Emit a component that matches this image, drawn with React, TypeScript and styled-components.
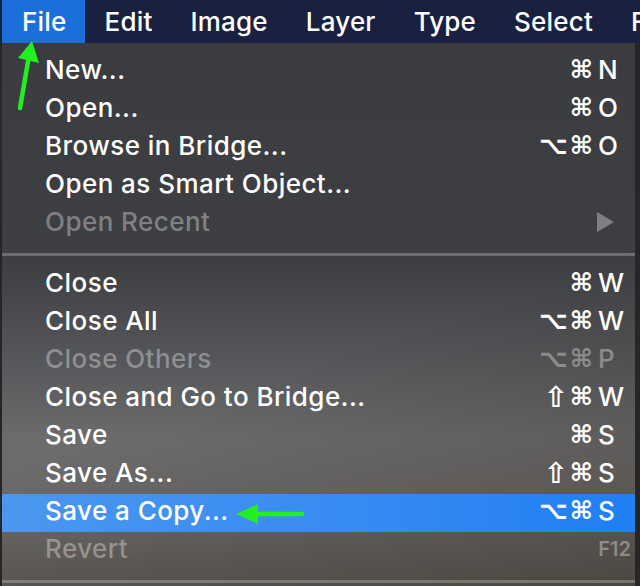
import styled, { createGlobalStyle } from "styled-components";

const GlobalStyle = createGlobalStyle`
  html, body {
    margin: 0;
    padding: 0;
    background: #262626;
  }
  body {
    font-family: Inter, "Noto Sans", "DejaVu Sans", sans-serif;
    -webkit-font-smoothing: antialiased;
  }
`;

const Screen = styled.div`
  position: relative;
  width: 640px;
  height: 586px;
  overflow: hidden;
  background: #262626;
  display: flex;
  flex-direction: column;
`;

const MenuBar = styled.div`
  display: flex;
  height: 43px;
  flex-shrink: 0;
  padding-left: 2px;
  background: #1a2140;
`;

const MenuTitle = styled.div<{ $active?: boolean }>`
  display: flex;
  align-items: center;
  padding: 0 18px 0 20px;
  height: 100%;
  font-size: 26px;
  font-weight: 500;
  letter-spacing: 0.2px;
  color: #ffffff;
  white-space: nowrap;
  background: ${({ $active }) => ($active ? "#1b6fd9" : "transparent")};
`;

const Dropdown = styled.div`
  flex: 1;
  margin: 0 5px 0 2px;
  padding-top: 10px;
  background:
    linear-gradient(160deg, rgba(0, 0, 0, 0) 55%, rgba(40, 30, 20, 0.35) 100%),
    linear-gradient(
      180deg,
      #3b3c3f 0%,
      #3e3f43 40%,
      #56575a 58%,
      #6c6c6d 72%,
      #6b6a69 86%,
      #5d5a56 100%
    );
`;

const Item = styled.div<{ $disabled?: boolean; $selected?: boolean }>`
  box-sizing: border-box;
  display: flex;
  align-items: center;
  height: 38px;
  padding: 0 0 4px 43px;
  line-height: 34px;
  font-size: 26px;
  font-weight: 500;
  letter-spacing: 0.45px;
  color: ${({ $disabled }) => ($disabled ? "rgba(255,255,255,0.34)" : "#ffffff")};
  background: ${({ $selected }) =>
    $selected ? "linear-gradient(90deg, #4b97f0 0%, #3a8cf2 50%, #1f7ff3 100%)" : "transparent"};
`;

const Label = styled.span`
  flex: 1;
  white-space: nowrap;
`;

const Shortcut = styled.span`
  display: flex;
  align-items: center;
  padding-right: 5px;
  letter-spacing: 0;
`;

const Mods = styled.span`
  display: flex;
  align-items: center;
  gap: 2px;
  margin-right: 5px;
`;

const ModGlyph = styled.span<{ $shift?: boolean }>`
  font-family: "DejaVu Sans", sans-serif;
  font-weight: bold;
  font-size: ${({ $shift }) => ($shift ? "29px" : "25px")};
  line-height: 30px;
`;

const Key = styled.span`
  width: 32px;
`;

const FKey = styled.span`
  font-size: 20px;
  font-weight: 600;
  letter-spacing: 0;
  padding-right: 4px;
`;

const SubArrow = styled.span`
  width: 0;
  height: 0;
  margin-right: 21px;
  border-top: 10px solid transparent;
  border-bottom: 10px solid transparent;
  border-left: 17px solid rgba(255, 255, 255, 0.34);
`;

const Separator = styled.div`
  height: 23px;
  display: flex;
  align-items: center;
  &::after {
    content: "";
    flex: 1;
    height: 3px;
    background: rgba(255, 255, 255, 0.24);
  }
`;

const Overlay = styled.svg`
  position: absolute;
  left: 0;
  top: 0;
  pointer-events: none;
`;

type Entry =
  | { sep: true }
  | {
      label: string;
      mods?: string;
      keyName?: string;
      fkey?: string;
      submenu?: boolean;
      disabled?: boolean;
      selected?: boolean;
    };

const titles = ["File", "Edit", "Image", "Layer", "Type", "Select", "Filter"];

const entries: Entry[] = [
  { label: "New...", mods: "⌘", keyName: "N" },
  { label: "Open...", mods: "⌘", keyName: "O" },
  { label: "Browse in Bridge...", mods: "⌥⌘", keyName: "O" },
  { label: "Open as Smart Object..." },
  { label: "Open Recent", submenu: true, disabled: true },
  { sep: true },
  { label: "Close", mods: "⌘", keyName: "W" },
  { label: "Close All", mods: "⌥⌘", keyName: "W" },
  { label: "Close Others", mods: "⌥⌘", keyName: "P", disabled: true },
  { label: "Close and Go to Bridge...", mods: "⇧⌘", keyName: "W" },
  { label: "Save", mods: "⌘", keyName: "S" },
  { label: "Save As...", mods: "⇧⌘", keyName: "S" },
  { label: "Save a Copy...", mods: "⌥⌘", keyName: "S", selected: true },
  { label: "Revert", fkey: "F12", disabled: true },
  { sep: true },
];

export default function App() {
  return (
    <>
      <GlobalStyle />
      <Screen>
        <MenuBar>
          {titles.map((t, i) => (
            <MenuTitle key={t} $active={i === 0}>
              {t}
            </MenuTitle>
          ))}
        </MenuBar>
        <Dropdown>
          {entries.map((e, i) =>
            "sep" in e ? (
              <Separator key={i} />
            ) : (
              <Item key={i} $disabled={e.disabled} $selected={e.selected}>
                <Label>{e.label}</Label>
                {e.keyName && (
                  <Shortcut>
                    <Mods>
                      {Array.from(e.mods ?? "").map((m, j) => (
                        <ModGlyph key={j} $shift={m === "⇧"}>
                          {m}
                        </ModGlyph>
                      ))}
                    </Mods>
                    <Key>{e.keyName}</Key>
                  </Shortcut>
                )}
                {e.fkey && <FKey>{e.fkey}</FKey>}
                {e.submenu && <SubArrow />}
              </Item>
            )
          )}
        </Dropdown>
        <Overlay width="640" height="586" viewBox="0 0 640 586">
          {/* arrow pointing at the File menu */}
          <line x1="20" y1="108" x2="29" y2="56" stroke="#22ee22" strokeWidth="4.5" strokeLinecap="round" />
          <polygon points="32,41 18,58 39,63" fill="#22ee22" />
          {/* arrow pointing at Save a Copy */}
          <line x1="255" y1="514" x2="302" y2="514" stroke="#22ee22" strokeWidth="4.5" strokeLinecap="round" />
          <polygon points="236,514 258,504 258,524" fill="#22ee22" />
        </Overlay>
      </Screen>
    </>
  );
}
